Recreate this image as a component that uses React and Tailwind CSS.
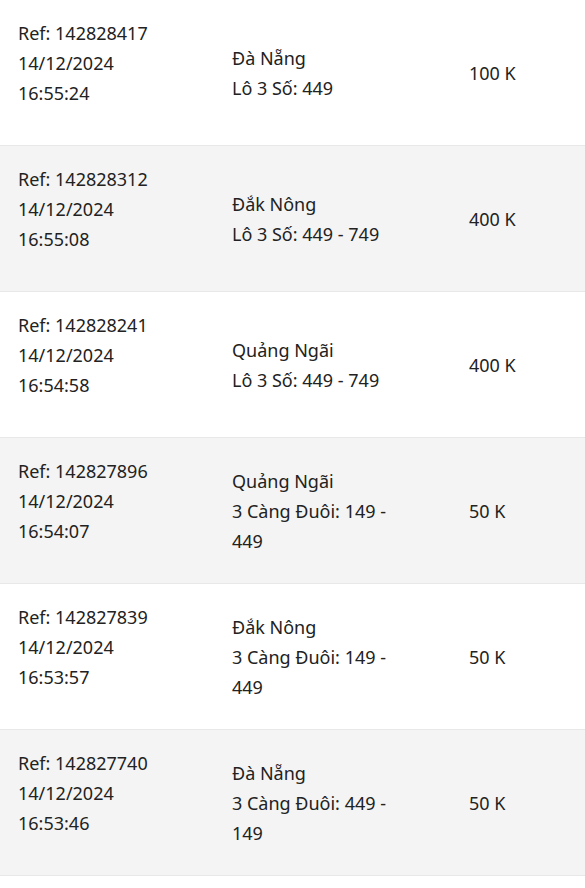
const rows = [
  { ref: '142828417', date: '14/12/2024', time: '16:55:24', place: 'Đà Nẵng', bet: 'Lô 3 Số: 449', amount: '100 K' },
  { ref: '142828312', date: '14/12/2024', time: '16:55:08', place: 'Đắk Nông', bet: 'Lô 3 Số: 449 - 749', amount: '400 K' },
  { ref: '142828241', date: '14/12/2024', time: '16:54:58', place: 'Quảng Ngãi', bet: 'Lô 3 Số: 449 - 749', amount: '400 K' },
  { ref: '142827896', date: '14/12/2024', time: '16:54:07', place: 'Quảng Ngãi', bet: '3 Càng Đuôi: 149 - 449', amount: '50 K' },
  { ref: '142827839', date: '14/12/2024', time: '16:53:57', place: 'Đắk Nông', bet: '3 Càng Đuôi: 149 - 449', amount: '50 K' },
  { ref: '142827740', date: '14/12/2024', time: '16:53:46', place: 'Đà Nẵng', bet: '3 Càng Đuôi: 449 - 149', amount: '50 K' },
]

export default function App() {
  return (
    <div className="min-h-screen bg-white text-[18px] leading-[30px] text-[#222]" style={{ fontFamily: '"Noto Sans", sans-serif' }}>
      {rows.map((r, i) => (
        <div
          key={r.ref}
          className={`grid h-[146px] grid-cols-[232px_237px_1fr] items-center border-b border-[#e8e8e8] ${
            i % 2 === 1 ? 'bg-[#f4f4f4]' : 'bg-white'
          }`}
        >
          <div className="mb-[20px] pl-[18px]">
            <div>Ref: {r.ref}</div>
            <div>{r.date}</div>
            <div>{r.time}</div>
          </div>
          <div className="max-w-[180px]">
            <div>{r.place}</div>
            <div>{r.bet}</div>
          </div>
          <div>{r.amount}</div>
        </div>
      ))}
    </div>
  )
}
